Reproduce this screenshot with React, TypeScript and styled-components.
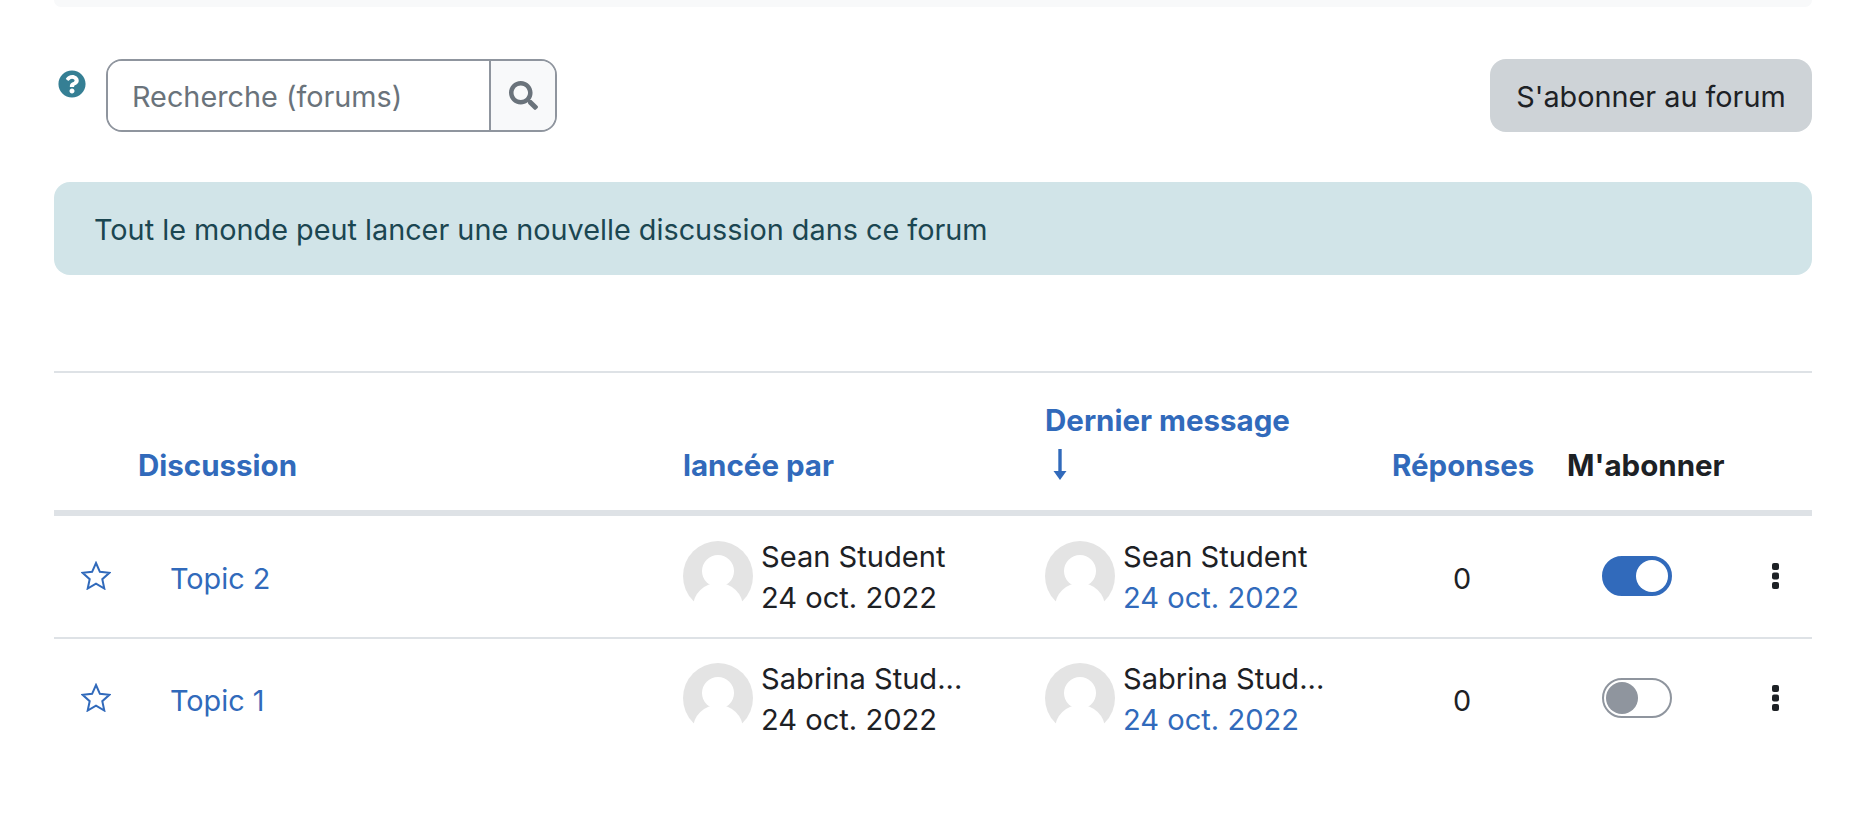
import React from "react";
import styled, { createGlobalStyle } from "styled-components";
import { FaQuestionCircle, FaSearch } from "react-icons/fa";

const Global = createGlobalStyle`
  html, body { margin: 0; padding: 0; background: #fff; }
  body { font-family: Inter, "Liberation Sans", sans-serif; color: #1d2125; font-size: 28.8px; line-height: 41px; }
  * { box-sizing: border-box; }
`;

const Page = styled.div`
  width: 1856px;
  height: 820px;
  overflow: hidden;
  padding: 0 44px 0 54px;
`;
const TopCard = styled.div`
  height: 7px;
  background: #f8f9fa;
  border-radius: 0 0 16px 16px;
`;
const Toolbar = styled.div`
  display: flex;
  align-items: flex-start;
  justify-content: space-between;
  margin-top: 52px;
`;
const SearchArea = styled.div`
  display: flex;
  align-items: flex-start;
`;
const Help = styled.span`
  display: flex;
  width: 52px;
  padding: 11px 0 0 4px;
  color: #357f94;
  font-size: 28px;
`;
const SearchBox = styled.form`
  display: flex;
  width: 451px;
  height: 73px;
  border: 2px solid #8f959e;
  border-radius: 16px;
  overflow: hidden;
`;
const SearchInput = styled.input`
  flex: 1;
  min-width: 0;
  border: 0;
  outline: 0;
  padding: 2px 24px 0;
  font: inherit;
  color: #1d2125;
  &::placeholder { color: #6a737b; opacity: 1; }
`;
const SearchButton = styled.span`
  width: 66px;
  display: flex;
  align-items: center;
  justify-content: center;
  background: #f8f9fa;
  border-left: 2px solid #8f959e;
  color: #6a737b;
  font-size: 29px;
`;
const SubscribeButton = styled.button`
  height: 73px;
  width: 322px;
  border: 0;
  border-radius: 16px;
  background: #ced3d7;
  color: #1d2125;
  font: inherit;
  padding: 1px 0 0;
`;
const Alert = styled.div`
  margin-top: 50px;
  height: 93px;
  display: flex;
  align-items: center;
  padding: 1px 40px 0;
  border-radius: 16px;
  background: #d1e4e8;
  color: #1b4651;
`;
const Table = styled.table`
  margin-top: 96px;
  width: 1758px;
  table-layout: fixed;
  border-collapse: collapse;
  border-top: 2px solid #dee2e6;
`;
const Col = styled.col<{ $w: number }>`
  width: ${(p) => p.$w}px;
`;
const Th = styled.th<{ $plain?: boolean }>`
  padding: 0 0 23px;
  height: 141px;
  border-bottom: 6px solid #dee2e6;
  vertical-align: bottom;
  text-align: left;
  font-weight: 700;
  font-size: 29.5px;
  line-height: 44px;
  color: ${(p) => (p.$plain ? "#1d2125" : "#316abb")};
`;
const ArrowWrap = styled.div`
  display: flex;
  height: 45px;
  align-items: center;
  padding-left: 8px;
`;
const Tr = styled.tr`
  height: 125px;
  & + & { height: 120px; }
  & + & td { border-top: 2px solid #dee2e6; }
`;
const Td = styled.td`
  padding: 0 0 2px;
  vertical-align: middle;
`;
const StarCell = styled(Td)`
  padding-left: 27px;
  line-height: 0;
`;
const TopicLink = styled.a`
  display: block;
  padding: 5px 0 0 32px;
  color: #316abb;
  text-decoration: none;
`;
const ReplyCount = styled.div`
  width: 140px;
  padding-top: 5px;
  text-align: center;
`;
const User = styled.div`
  display: flex;
  align-items: center;
  gap: 8px;
`;
const UserText = styled.div`
  font-size: 29.1px;
  padding-top: 3px;
`;
const Name = styled.div`
  white-space: nowrap;
`;
const DateText = styled.div<{ $link?: boolean }>`
  white-space: nowrap;
  color: ${(p) => (p.$link ? "#316abb" : "#1d2125")};
`;
const Switch = styled.div<{ $on?: boolean }>`
  width: 70px;
  height: 40px;
  margin-left: 35px;
  padding: 2px;
  border-radius: 20px;
  border: 2px solid ${(p) => (p.$on ? "#316abb" : "#8f959e")};
  background: ${(p) => (p.$on ? "#316abb" : "#fff")};
  display: flex;
  justify-content: ${(p) => (p.$on ? "flex-end" : "flex-start")};
`;
const Thumb = styled.span<{ $on?: boolean }>`
  width: 32px;
  height: 32px;
  border-radius: 50%;
  background: ${(p) => (p.$on ? "#fff" : "#8f959e")};
`;
const MenuCell = styled(Td)`
  padding-left: 22px;
  line-height: 0;
`;

const Star = () => (
  <svg width="30" height="29" viewBox="0 0 30 29">
    <polygon
      points="15,2 18.9,10.8 28.4,11.8 21.3,18.2 23.3,27.5 15,22.7 6.7,27.5 8.7,18.2 1.6,11.8 11.1,10.8"
      fill="none"
      stroke="#316abb"
      strokeWidth="2"
      strokeLinejoin="miter"
    />
  </svg>
);

const Avatar = () => (
  <svg width="70" height="70" viewBox="0 0 70 70">
    <circle cx="35" cy="35" r="35" fill="#e4e4e4" />
    <circle cx="35" cy="30" r="16" fill="#fff" />
    <ellipse cx="35" cy="66" rx="25" ry="24" fill="#fff" />
    <rect x="8" y="62" width="54" height="8" fill="#fff" />
  </svg>
);

const Kebab = () => (
  <svg width="7" height="26" viewBox="0 0 7 26">
    <rect x="0" y="0" width="7" height="7" rx="2" fill="#1d2125" />
    <rect x="0" y="9.5" width="7" height="7" rx="2" fill="#1d2125" />
    <rect x="0" y="19" width="7" height="7" rx="2" fill="#1d2125" />
  </svg>
);

const DownArrow = () => (
  <svg width="14" height="31" viewBox="0 0 14 31">
    <path d="M7 0V26" stroke="#316abb" strokeWidth="3.4" fill="none" />
    <path d="M0.5 22H13.5L7 31Z" fill="#316abb" />
  </svg>
);

const UserBlock = ({ name, linked }: { name: string; linked?: boolean }) => (
  <User>
    <Avatar />
    <UserText>
      <Name>{name}</Name>
      <DateText $link={linked}>24 oct. 2022</DateText>
    </UserText>
  </User>
);

const rows = [
  { topic: "Topic 2", user: "Sean Student", on: true },
  { topic: "Topic 1", user: "Sabrina Stud...", on: false },
];

export default function App() {
  return (
    <Page>
      <Global />
      <TopCard />
      <Toolbar>
        <SearchArea>
          <Help><FaQuestionCircle /></Help>
          <SearchBox>
            <SearchInput placeholder="Recherche (forums)" />
            <SearchButton><FaSearch /></SearchButton>
          </SearchBox>
        </SearchArea>
        <SubscribeButton>S'abonner au forum</SubscribeButton>
      </Toolbar>
      <Alert>Tout le monde peut lancer une nouvelle discussion dans ce forum</Alert>
      <Table>
        <colgroup>
          <Col $w={84} />
          <Col $w={545} />
          <Col $w={362} />
          <Col $w={347} />
          <Col $w={175} />
          <Col $w={183} />
          <Col $w={62} />
        </colgroup>
        <thead>
          <tr>
            <Th />
            <Th>Discussion</Th>
            <Th>lancée par</Th>
            <Th>
              Dernier message
              <ArrowWrap><DownArrow /></ArrowWrap>
            </Th>
            <Th>Réponses</Th>
            <Th $plain>M'abonner</Th>
            <Th />
          </tr>
        </thead>
        <tbody>
          {rows.map((r) => (
            <Tr key={r.topic}>
              <StarCell><Star /></StarCell>
              <Td><TopicLink href="#">{r.topic}</TopicLink></Td>
              <Td><UserBlock name={r.user} /></Td>
              <Td><UserBlock name={r.user} linked /></Td>
              <Td><ReplyCount>0</ReplyCount></Td>
              <Td><Switch $on={r.on}><Thumb $on={r.on} /></Switch></Td>
              <MenuCell><Kebab /></MenuCell>
            </Tr>
          ))}
        </tbody>
      </Table>
    </Page>
  );
}
